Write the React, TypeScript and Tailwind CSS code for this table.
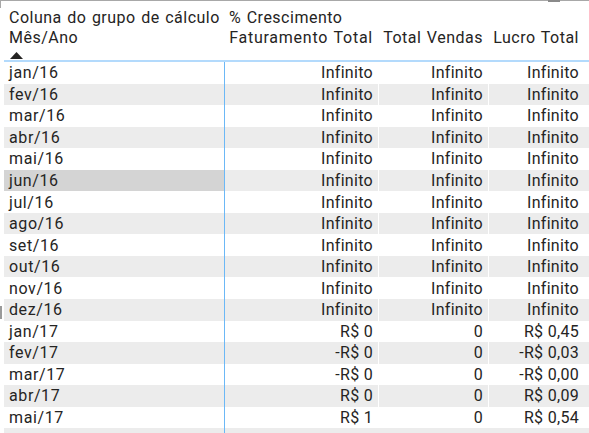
import React from 'react'

interface Row {
  label: string
  faturamento: string
  vendas: string
  lucro: string
}

const inf = 'Infinito'

const rows: Row[] = [
  ...['jan/16', 'fev/16', 'mar/16', 'abr/16', 'mai/16', 'jun/16', 'jul/16', 'ago/16', 'set/16', 'out/16', 'nov/16', 'dez/16'].map(label => ({
    label,
    faturamento: inf,
    vendas: inf,
    lucro: inf,
  })),
  { label: 'jan/17', faturamento: 'R$ 0', vendas: '0', lucro: 'R$ 0,45' },
  { label: 'fev/17', faturamento: '-R$ 0', vendas: '0', lucro: '-R$ 0,03' },
  { label: 'mar/17', faturamento: '-R$ 0', vendas: '0', lucro: '-R$ 0,00' },
  { label: 'abr/17', faturamento: 'R$ 0', vendas: '0', lucro: 'R$ 0,09' },
  { label: 'mai/17', faturamento: 'R$ 1', vendas: '0', lucro: 'R$ 0,54' },
]

const font = { fontFamily: 'Roboto, "Noto Sans", sans-serif' }

export default function App() {
  return (
    <div className="relative w-[589px] h-[433px] overflow-hidden bg-white text-[#252423] text-[16px] leading-5" style={font}>
      {/* selection corner + top edge */}
      <div className="absolute left-0 top-0 w-full h-px bg-[#a8a8a8]" />
      <div className="absolute left-0 top-0 w-px h-[8px] bg-[#a8a8a8]" />
      <div className="absolute left-[548px] top-0 w-[12px] h-[2px] bg-[#8a8a8a]" />
      <div className="absolute left-0 top-[306px] w-[2px] h-[13px] bg-[#9a9a9a]" />

      <div className="pl-[4px]">
        <div className="flex h-[62px] border-b-2 border-[#b3dafc] tracking-[0.5px] [word-spacing:1px]">
          <div className="w-[220px] pl-[5px] pt-[8px]">
            <div className="whitespace-nowrap">Coluna do grupo de cálculo</div>
            <div>Mês/Ano</div>
            <svg width="13" height="7" viewBox="0 0 13 7" className="mt-[4px] ml-[1px]">
              <polygon points="6.5,0 13,7 0,7" fill="#252423" />
            </svg>
          </div>
          <div className="w-[154px] pl-[5px] pt-[8px]">
            <div className="whitespace-nowrap">% Crescimento</div>
            <div className="whitespace-nowrap text-right pr-[5px] tracking-[0.75px]">Faturamento Total</div>
          </div>
          <div className="w-[110px] pr-[5px] pt-[28px] text-right whitespace-nowrap">Total Vendas</div>
          <div className="flex-1 pr-[10px] pt-[28px] text-right whitespace-nowrap">Lucro Total</div>
        </div>

        <div className="flex flex-col">
          {rows.map((r, i) => {
            const stripe = i % 2 === 1 ? 'bg-[#ececec]' : 'bg-white'
            const hover = r.label === 'jun/16'
            return (
              <div key={r.label} className={`flex h-[21.56px] items-center ${stripe}`}>
                <div className={`w-[220px] h-full flex items-center pl-[5px] pt-px tracking-[0.6px] ${hover ? 'bg-[#d4d4d4]' : ''}`}>{r.label}</div>
                <div className="w-[154px] h-full flex items-center justify-end pr-[5px] pt-px tracking-[0.3px] border-l border-[#6cb8f6]">{r.faturamento}</div>
                <div className="w-[110px] h-full flex items-center justify-end pr-[5px] pt-px tracking-[0.3px] border-l border-white">{r.vendas}</div>
                <div className="flex-1 h-full flex items-center justify-end pr-[10px] pt-px tracking-[0.3px] border-l border-white">{r.lucro}</div>
              </div>
            )
          })}
          <div className="flex h-[10px] bg-[#ececec]">
            <div className="w-[220px]" />
            <div className="w-[154px] border-l border-[#6cb8f6]" />
          </div>
        </div>
      </div>
    </div>
  )
}
